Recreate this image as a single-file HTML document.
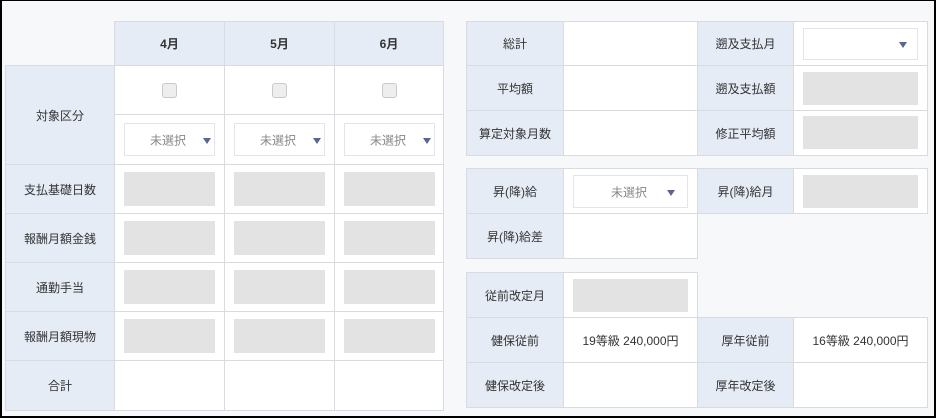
<!DOCTYPE html>
<html><head><meta charset="utf-8"><style>
*{margin:0;padding:0;box-sizing:border-box}
body{width:936px;height:418px;background:#000;position:relative;overflow:hidden;font-family:"Liberation Sans","Noto Sans CJK JP",sans-serif;font-size:12px;color:#333}
#bg{position:absolute;left:2px;top:1px;width:932px;height:415px;background:#f7f8fa}
.c{position:absolute;border:1px solid #d9dbe0;background:#fff;display:flex;align-items:center;justify-content:center}
.h{background:#e6ecf6}
.b{font-weight:bold}
.g{position:absolute;background:#e3e3e3}
.s{position:absolute;background:#fff;border:1px solid #e3e5ea;color:#888}
.s span{position:absolute;top:50%;transform:translateY(-50%)}
.s i{position:absolute;top:50%;margin-top:-2px;width:0;height:0;border-left:4px solid transparent;border-right:4px solid transparent;border-top:6px solid #5c6494}
.cb{width:15px;height:15px;border:1px solid #c9c9c9;background:#eee;border-radius:3px}
</style></head><body>
<div id="bg"></div>
<!-- left table -->
<div class="c h b" style="left:114px;top:21px;width:111px;height:45px">4月</div>
<div class="c h b" style="left:224px;top:21px;width:111px;height:45px">5月</div>
<div class="c h b" style="left:334px;top:21px;width:110px;height:45px">6月</div>
<div class="c h" style="left:5px;top:65px;width:110px;height:100px">対象区分</div>
<div class="c" style="left:114px;top:65px;width:111px;height:50px"><div class="cb"></div></div>
<div class="c" style="left:224px;top:65px;width:111px;height:50px"><div class="cb"></div></div>
<div class="c" style="left:334px;top:65px;width:110px;height:50px"><div class="cb"></div></div>
<div class="c" style="left:114px;top:114px;width:111px;height:51px"></div>
<div class="c" style="left:224px;top:114px;width:111px;height:51px"></div>
<div class="c" style="left:334px;top:114px;width:110px;height:51px"></div>
<div class="s" style="left:124px;top:123px;width:91px;height:33px"><span style="left:25px">未選択</span><i style="left:78px"></i></div>
<div class="s" style="left:234px;top:123px;width:91px;height:33px"><span style="left:25px">未選択</span><i style="left:78px"></i></div>
<div class="s" style="left:344px;top:123px;width:91px;height:33px"><span style="left:25px">未選択</span><i style="left:78px"></i></div>

<div class="c h" style="left:5px;top:164px;width:110px;height:50px">支払基礎日数</div>
<div class="c" style="left:114px;top:164px;width:111px;height:50px"></div>
<div class="c" style="left:224px;top:164px;width:111px;height:50px"></div>
<div class="c" style="left:334px;top:164px;width:110px;height:50px"></div>
<div class="g" style="left:124px;top:172px;width:91px;height:34px"></div>
<div class="g" style="left:234px;top:172px;width:91px;height:34px"></div>
<div class="g" style="left:344px;top:172px;width:91px;height:34px"></div>

<div class="c h" style="left:5px;top:213px;width:110px;height:50px">報酬月額金銭</div>
<div class="c" style="left:114px;top:213px;width:111px;height:50px"></div>
<div class="c" style="left:224px;top:213px;width:111px;height:50px"></div>
<div class="c" style="left:334px;top:213px;width:110px;height:50px"></div>
<div class="g" style="left:124px;top:221px;width:91px;height:34px"></div>
<div class="g" style="left:234px;top:221px;width:91px;height:34px"></div>
<div class="g" style="left:344px;top:221px;width:91px;height:34px"></div>

<div class="c h" style="left:5px;top:262px;width:110px;height:50px">通勤手当</div>
<div class="c" style="left:114px;top:262px;width:111px;height:50px"></div>
<div class="c" style="left:224px;top:262px;width:111px;height:50px"></div>
<div class="c" style="left:334px;top:262px;width:110px;height:50px"></div>
<div class="g" style="left:124px;top:270px;width:91px;height:34px"></div>
<div class="g" style="left:234px;top:270px;width:91px;height:34px"></div>
<div class="g" style="left:344px;top:270px;width:91px;height:34px"></div>

<div class="c h" style="left:5px;top:311px;width:110px;height:50px">報酬月額現物</div>
<div class="c" style="left:114px;top:311px;width:111px;height:50px"></div>
<div class="c" style="left:224px;top:311px;width:111px;height:50px"></div>
<div class="c" style="left:334px;top:311px;width:110px;height:50px"></div>
<div class="g" style="left:124px;top:319px;width:91px;height:34px"></div>
<div class="g" style="left:234px;top:319px;width:91px;height:34px"></div>
<div class="g" style="left:344px;top:319px;width:91px;height:34px"></div>

<div class="c h" style="left:5px;top:360px;width:110px;height:51px">合計</div>
<div class="c" style="left:114px;top:360px;width:111px;height:51px"></div>
<div class="c" style="left:224px;top:360px;width:111px;height:51px"></div>
<div class="c" style="left:334px;top:360px;width:110px;height:51px"></div>

<!-- right table 1 -->
<div class="c h" style="left:466px;top:21px;width:98px;height:45px">総計</div>
<div class="c" style="left:563px;top:21px;width:135px;height:45px"></div>
<div class="c h" style="left:697px;top:21px;width:97px;height:45px">遡及支払月</div>
<div class="c" style="left:793px;top:21px;width:135px;height:45px"></div>
<div class="s" style="left:803px;top:28px;width:115px;height:32px"><i style="left:95px"></i></div>
<div class="c h" style="left:466px;top:65px;width:98px;height:46px">平均額</div>
<div class="c" style="left:563px;top:65px;width:135px;height:46px"></div>
<div class="c h" style="left:697px;top:65px;width:97px;height:46px">遡及支払額</div>
<div class="c" style="left:793px;top:65px;width:135px;height:46px"></div>
<div class="g" style="left:803px;top:72px;width:115px;height:33px"></div>
<div class="c h" style="left:466px;top:110px;width:98px;height:46px">算定対象月数</div>
<div class="c" style="left:563px;top:110px;width:135px;height:46px"></div>
<div class="c h" style="left:697px;top:110px;width:97px;height:46px">修正平均額</div>
<div class="c" style="left:793px;top:110px;width:135px;height:46px"></div>
<div class="g" style="left:803px;top:116px;width:115px;height:33px"></div>

<!-- right table 2 -->
<div class="c h" style="left:466px;top:168px;width:98px;height:46px">昇(降)給</div>
<div class="c" style="left:563px;top:168px;width:135px;height:46px"></div>
<div class="s" style="left:573px;top:175px;width:115px;height:33px"><span style="left:37px">未選択</span><i style="left:93px"></i></div>
<div class="c h" style="left:697px;top:168px;width:97px;height:46px">昇(降)給月</div>
<div class="c" style="left:793px;top:168px;width:135px;height:46px"></div>
<div class="g" style="left:803px;top:175px;width:115px;height:33px"></div>
<div class="c h" style="left:466px;top:213px;width:98px;height:46px">昇(降)給差</div>
<div class="c" style="left:563px;top:213px;width:135px;height:46px"></div>

<!-- right table 3 -->
<div class="c h" style="left:466px;top:272px;width:98px;height:46px">従前改定月</div>
<div class="c" style="left:563px;top:272px;width:135px;height:46px"></div>
<div class="g" style="left:573px;top:279px;width:115px;height:33px"></div>
<div class="c h" style="left:466px;top:317px;width:98px;height:46px">健保従前</div>
<div class="c" style="left:563px;top:317px;width:135px;height:46px">19等級 240,000円</div>
<div class="c h" style="left:697px;top:317px;width:97px;height:46px">厚年従前</div>
<div class="c" style="left:793px;top:317px;width:135px;height:46px">16等級 240,000円</div>
<div class="c h" style="left:466px;top:362px;width:98px;height:46px">健保改定後</div>
<div class="c" style="left:563px;top:362px;width:135px;height:46px"></div>
<div class="c h" style="left:697px;top:362px;width:97px;height:46px">厚年改定後</div>
<div class="c" style="left:793px;top:362px;width:135px;height:46px"></div>
</body></html>
